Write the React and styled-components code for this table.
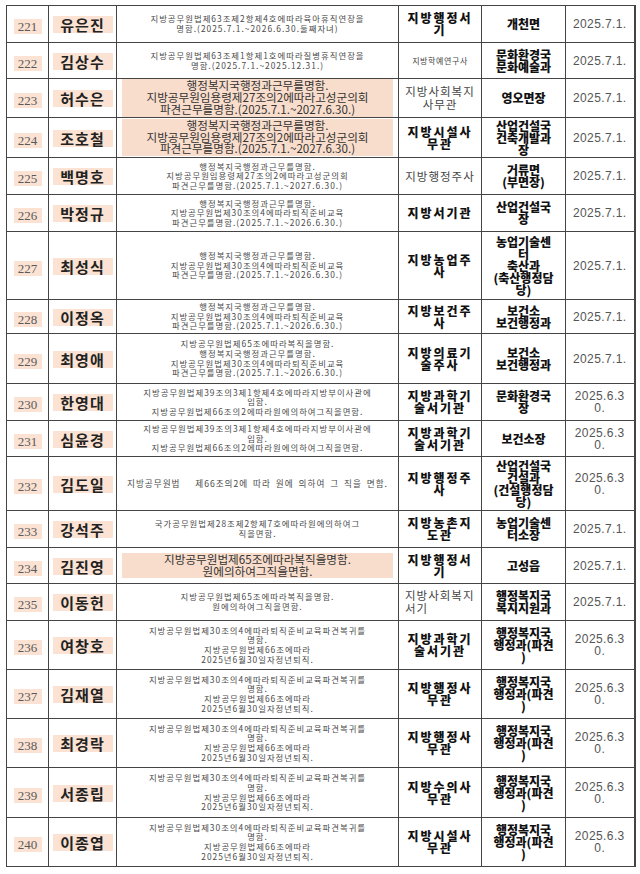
import React from "react";
import styled, { createGlobalStyle } from "styled-components";

const GlobalStyle = createGlobalStyle`
  html, body {
    margin: 0;
    padding: 0;
    background: #fff;
  }
  body {
    font-family: "Noto Sans CJK KR", "Noto Sans", sans-serif;
  }
`;

const Page = styled.div`
  padding: 5px 6px 0 6px;
`;

const Sheet = styled.table`
  border-collapse: collapse;
  table-layout: fixed;
  width: 628px;
  border-right: 2px solid #444;
  col.num { width: 42px; }
  col.name { width: 68px; }
  col.desc { width: 282px; }
  col.rank { width: 83px; }
  col.dept { width: 84px; }
  col.date { width: 69px; }
`;

const Row = styled.tr`
  height: ${(p) => p.$h}px;
`;

const Cell = styled.td`
  border: 1px solid #444;
  padding: 0;
  text-align: center;
  vertical-align: middle;
`;

const NumTag = styled.span`
  display: inline-block;
  width: 28px;
  background: #fbe2d3;
  font-family: "Liberation Serif", serif;
  font-size: 13px;
  line-height: 15px;
  color: #5a5a5a;
`;

const NameTag = styled.span`
  display: inline-block;
  width: 60px;
  background: #fbe2d3;
  font-size: 15px;
  font-weight: 700;
  line-height: 17px;
  letter-spacing: 1px;
  color: #222;
`;

const Desc = styled.div`
  white-space: pre;
  font-size: 8.4px;
  line-height: 9.6px;
  letter-spacing: 1px;
  color: #4a4a4a;
`;

const WideDesc = styled(Desc)`
  font-size: 8.6px;
  word-spacing: 2px;
`;

const BigDesc = styled.div`
  white-space: pre;
  margin: 0 5px;
  background: #f9ddcc;
  font-size: 11.6px;
  line-height: 11.8px;
  padding: 1px 0;
  color: #333;
`;

const Rank = styled.div`
  white-space: pre;
  font-size: ${(p) => (p.$small ? "8px" : p.$plain ? "11.5px" : "12px")};
  font-weight: ${(p) => (p.$plain || p.$small ? 400 : 900)};
  letter-spacing: ${(p) => (p.$small ? "0.6px" : p.$plain ? "1px" : "2px")};
  line-height: ${(p) => (p.$plain ? "13px" : "12px")};
  text-align: ${(p) => (p.$left ? "left" : "center")};
  padding-left: ${(p) => (p.$left ? "6px" : "0")};
  color: ${(p) => (p.$plain || p.$small ? "#444" : "#111")};
`;

const Dept = styled.div`
  white-space: pre;
  font-size: 12px;
  font-weight: 900;
  line-height: 12px;
  color: #111;
`;

const DateText = styled.div`
  white-space: pre;
  font-family: "Liberation Sans", Arial, sans-serif;
  font-size: 12px;
  letter-spacing: 0.4px;
  line-height: 12px;
  color: #555;
`;

const TRANSFER =
  "행정복지국행정과근무를명함.\n지방공무원법제30조의4에따라퇴직준비교육\n파견근무를명함.(2025.7.1.~2026.6.30.)";
const COUNCIL =
  "행정복지국행정과근무를명함.\n지방공무원임용령제27조의2에따라고성군의회\n파견근무를명함.(2025.7.1.~2027.6.30.)";
const PROMOTE =
  "지방공무원법제39조의3제1항제4호에따라지방부이사관에\n임함.\n지방공무원법제66조의2에따라원에의하여그직을면함.";
const RETIRE =
  "지방공무원법제30조의4에따라퇴직준비교육파견복귀를\n명함.\n지방공무원법제66조에따라\n2025년6월30일자정년퇴직.";
const RETURN = "지방공무원법제65조에따라복직을명함.\n원에의하여그직을면함.";

const rows = [
  { no: 221, name: "유은진", h: 37, desc: "지방공무원법제63조제2항제4호에따라육아휴직연장을\n명함.(2025.7.1.~2026.6.30.둘째자녀)", rank: "지방행정서\n기", dept: "개천면", date: "2025.7.1." },
  { no: 222, name: "김상수", h: 36, desc: "지방공무원법제63조제1항제1호에따라질병휴직연장을\n명함.(2025.7.1.~2025.12.31.)", rank: "지방학예연구사", rankSmall: true, dept: "문화환경국\n문화예술과", date: "2025.7.1." },
  { no: 223, name: "허수은", h: 39, desc: COUNCIL, big: true, rank: "지방사회복지\n사무관", plain: true, dept: "영오면장", date: "2025.7.1." },
  { no: 224, name: "조호철", h: 40, desc: COUNCIL, big: true, rank: "지방시설사\n무관", dept: "산업건설국\n건축개발과\n장", date: "2025.7.1." },
  { no: 225, name: "백명호", h: 37, desc: COUNCIL, rank: "지방행정주사", plain: true, dept: "거류면\n(부면장)", date: "2025.7.1." },
  { no: 226, name: "박정규", h: 37, desc: TRANSFER, rank: "지방서기관", dept: "산업건설국\n장", date: "2025.7.1." },
  { no: 227, name: "최성식", h: 68, desc: TRANSFER, rank: "지방농업주\n사", dept: "농업기술센\n터\n축산과\n(축산행정담\n당)", date: "2025.7.1." },
  { no: 228, name: "이정옥", h: 34, desc: TRANSFER, rank: "지방보건주\n사", dept: "보건소\n보건행정과", date: "2025.7.1." },
  { no: 229, name: "최영애", h: 50, desc: "지방공무원법제65조에따라복직을명함.\n" + TRANSFER, rank: "지방의료기\n술주사", dept: "보건소\n보건행정과", date: "2025.7.1." },
  { no: 230, name: "한영대", h: 37, desc: PROMOTE, rank: "지방과학기\n술서기관", dept: "문화환경국\n장", date: "2025.6.3\n0." },
  { no: 231, name: "심윤경", h: 36, desc: PROMOTE, rank: "지방과학기\n술서기관", dept: "보건소장", date: "2025.6.3\n0." },
  { no: 232, name: "김도일", h: 54, desc: "지방공무원법   제66조의2에 따라 원에 의하여 그 직을 면함.", wide: true, rank: "지방행정주\n사", dept: "산업건설국\n건설과\n(건설행정담\n당)", date: "2025.6.3\n0." },
  { no: 233, name: "강석주", h: 37, desc: "국가공무원법제28조제2항제7호에따라원에의하여그\n직을면함.", rank: "지방농촌지\n도관", dept: "농업기술센\n터소장", date: "2025.7.1." },
  { no: 234, name: "김진영", h: 36, desc: RETURN, big: true, rank: "지방행정서\n기", dept: "고성읍", date: "2025.7.1." },
  { no: 235, name: "이동헌", h: 37, desc: RETURN, rank: "지방사회복지\n서기", plain: true, left: true, dept: "행정복지국\n복지지원과", date: "2025.7.1." },
  { no: 236, name: "여창호", h: 49, desc: RETIRE, rank: "지방과학기\n술서기관", dept: "행정복지국\n행정과(파견\n)", date: "2025.6.3\n0." },
  { no: 237, name: "김재열", h: 49, desc: RETIRE, rank: "지방행정사\n무관", dept: "행정복지국\n행정과(파견\n)", date: "2025.6.3\n0." },
  { no: 238, name: "최경락", h: 49, desc: RETIRE, rank: "지방행정사\n무관", dept: "행정복지국\n행정과(파견\n)", date: "2025.6.3\n0." },
  { no: 239, name: "서종립", h: 50, desc: RETIRE, rank: "지방수의사\n무관", dept: "행정복지국\n행정과(파견\n)", date: "2025.6.3\n0." },
  { no: 240, name: "이종엽", h: 49, desc: RETIRE, rank: "지방시설사\n무관", dept: "행정복지국\n행정과(파견\n)", date: "2025.6.3\n0." },
];

export default function App() {
  return (
    <Page>
      <GlobalStyle />
      <Sheet>
        <colgroup>
          <col className="num" />
          <col className="name" />
          <col className="desc" />
          <col className="rank" />
          <col className="dept" />
          <col className="date" />
        </colgroup>
        <tbody>
          {rows.map((r) => (
            <Row key={r.no} $h={r.h}>
              <Cell>
                <NumTag>{r.no}</NumTag>
              </Cell>
              <Cell>
                <NameTag>{r.name}</NameTag>
              </Cell>
              <Cell>
                {r.big ? (
                  <BigDesc>{r.desc}</BigDesc>
                ) : r.wide ? (
                  <WideDesc>{r.desc}</WideDesc>
                ) : (
                  <Desc>{r.desc}</Desc>
                )}
              </Cell>
              <Cell>
                <Rank $plain={r.plain} $small={r.rankSmall} $left={r.left}>
                  {r.rank}
                </Rank>
              </Cell>
              <Cell>
                <Dept>{r.dept}</Dept>
              </Cell>
              <Cell>
                <DateText>{r.date}</DateText>
              </Cell>
            </Row>
          ))}
        </tbody>
      </Sheet>
    </Page>
  );
}
